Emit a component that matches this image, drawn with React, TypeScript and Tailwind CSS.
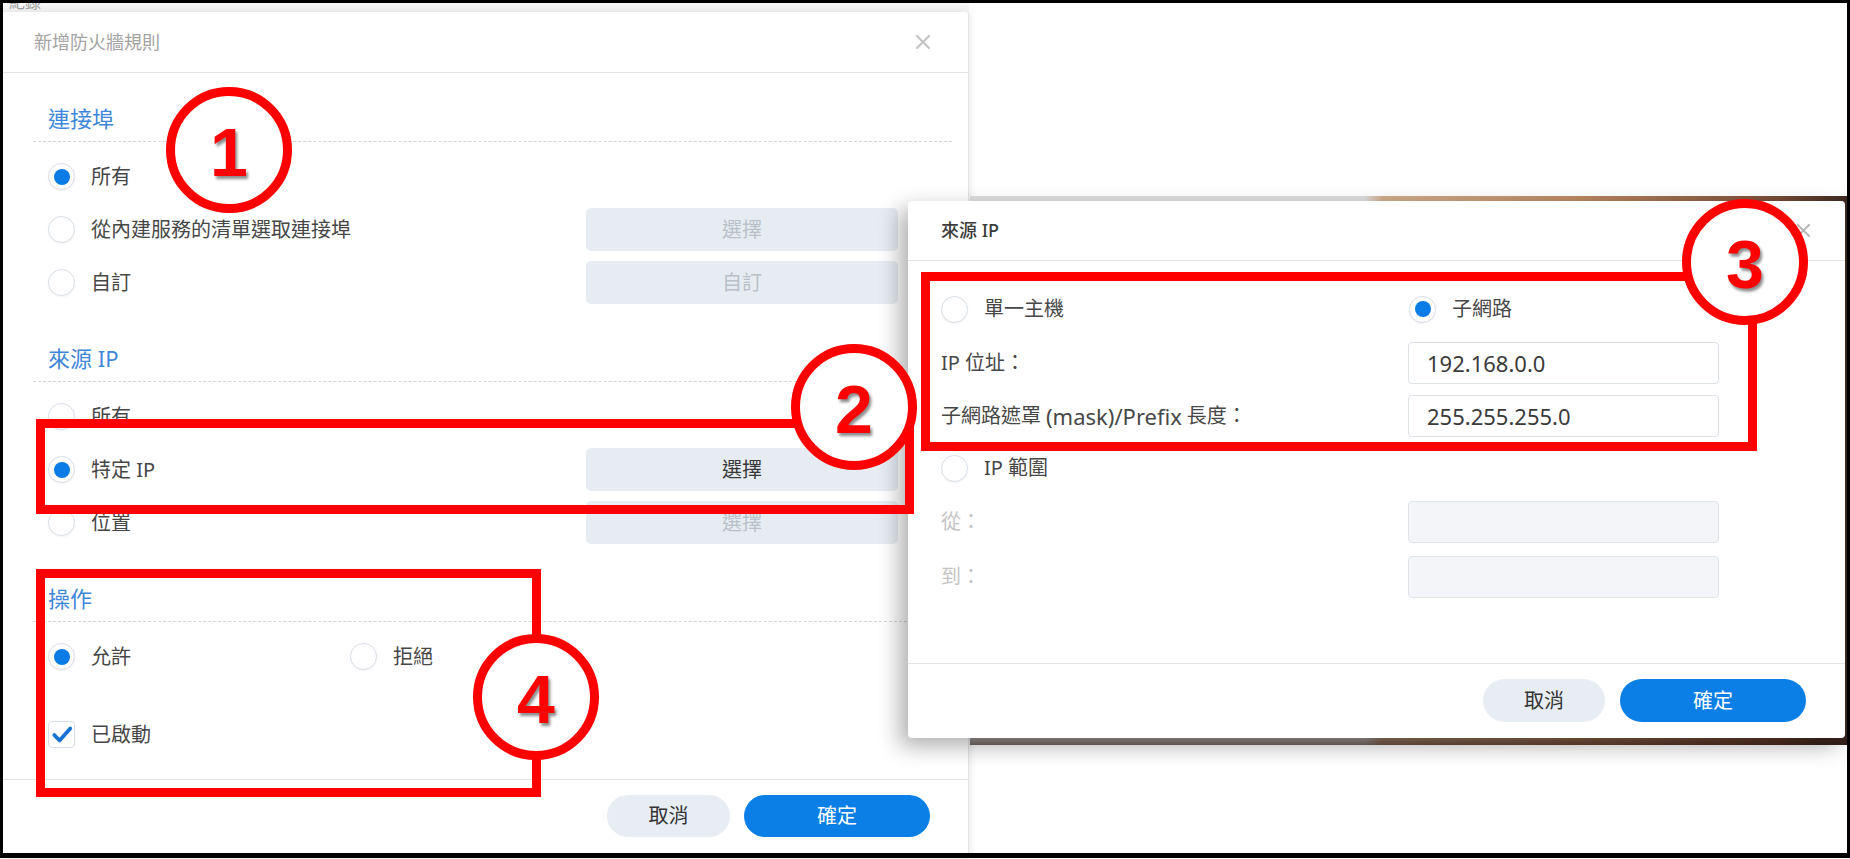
import React from 'react';

function Radio({ checked = false }: { checked?: boolean }) {
  return (
    <span className="flex h-[27px] w-[27px] shrink-0 items-center justify-center rounded-full border-[1.5px] border-[#d7dee7] bg-white shadow-[0_1px_2px_rgba(0,0,0,0.05)]">
      {checked && <span className="h-[16px] w-[16px] rounded-full bg-[#0b7be5]" />}
    </span>
  );
}

function Choice({ label, checked = false }: { label: string; checked?: boolean }) {
  return (
    <div className="flex items-center gap-[16px]">
      <Radio checked={checked} />
      <span className="text-[#474747]">{label}</span>
    </div>
  );
}

function CloseIcon({ className }: { className: string }) {
  return (
    <svg className={className} viewBox="0 0 16 16" fill="none" stroke="currentColor" strokeWidth={2.2} strokeLinecap="round">
      <path d="M2 2l12 12M14 2L2 14" />
    </svg>
  );
}

function SectionTitle({ children }: { children: React.ReactNode }) {
  return (
    <div className="h-[38px] border-b border-dashed border-[#d5d5d5] pl-[15px] text-[22px] leading-[28px] text-[#3f87d8]">
      {children}
    </div>
  );
}

function OptionRow({ label, checked = false, action, active = false }: { label: string; checked?: boolean; action?: string; active?: boolean }) {
  return (
    <div className="grid h-[53px] grid-cols-[538px_312px] items-center">
      <Choice label={label} checked={checked} />
      {action && (
        <button className={`h-[43px] rounded-[5px] bg-[#e7ecf2] ${active ? 'text-[#383838]' : 'text-[#b9c0c8]'}`}>
          {action}
        </button>
      )}
    </div>
  );
}

function Field({ value = '', disabled = false }: { value?: string; disabled?: boolean }) {
  return (
    <input
      readOnly
      disabled={disabled}
      defaultValue={value}
      className={`h-[42px] w-full rounded-[4px] border px-[18px] text-[22px] outline-none ${
        disabled ? 'border-[#e0e4e9] bg-[#f3f5f8]' : 'border-[#dce1e7] bg-white text-[#3a3a3a]'
      }`}
    />
  );
}

function Marker({ n, className }: { n: string; className: string }) {
  return (
    <div className={`absolute flex h-[126px] w-[126px] items-center justify-center rounded-full border-[9px] border-[#ff0000] bg-white ${className}`}>
      <span className="pt-[4px] font-['Liberation_Sans',Arial,sans-serif] text-[68px] font-bold leading-none text-[#ff0000] [text-shadow:2px_3px_3px_rgba(0,0,0,0.45)]">
        {n}
      </span>
    </div>
  );
}

export default function App() {
  return (
    <div className="relative h-[859px] w-[1850px] overflow-hidden bg-white font-['Noto_Sans','Noto_Sans_CJK_TC',sans-serif] text-[20px]">
      {/* window behind the rule dialog */}
      <div className="absolute left-[3px] top-[3px] h-[9px] w-[966px] overflow-hidden bg-[#f7f7f7]">
        <span className="absolute left-[6px] top-[-13px] text-[16px] text-[#a0a0a0]">紀錄</span>
      </div>

      {/* 新增防火牆規則 */}
      <div className="absolute left-[3px] top-[12px] flex h-[846px] w-[966px] flex-col rounded-t-[3px] border-r border-[#e4e4e4] bg-white shadow-[0_0_8px_rgba(0,0,0,0.12)]">
        <div className="flex h-[61px] shrink-0 items-center justify-between border-b border-[#e3e3e3] pl-[31px] pr-[37px]">
          <span className="text-[18px] text-[#a3a3a3]">新增防火牆規則</span>
          <CloseIcon className="h-[16px] w-[16px] text-[#c4c4c4]" />
        </div>

        <div className="pl-[30px] pr-[16px] pt-[31px]">
          <SectionTitle>連接埠</SectionTitle>
          <div className="pl-[15px] pt-[8px]">
            <OptionRow label="所有" checked />
            <OptionRow label="從內建服務的清單選取連接埠" action="選擇" />
            <OptionRow label="自訂" action="自訂" />
          </div>

          <div className="mt-[35px]">
            <SectionTitle>來源 IP</SectionTitle>
          </div>
          <div className="pl-[15px] pt-[8px]">
            <OptionRow label="所有" />
            <OptionRow label="特定 IP" checked action="選擇" active />
            <OptionRow label="位置" action="選擇" />
          </div>

          <div className="mt-[35px]">
            <SectionTitle>操作</SectionTitle>
          </div>
          <div className="pl-[15px] pt-[8px]">
            <div className="grid h-[53px] grid-cols-[302px_auto] items-center">
              <Choice label="允許" checked />
              <Choice label="拒絕" />
            </div>
            <div className="mt-[25px] flex h-[53px] items-center gap-[16px]">
              <span className="flex h-[27px] w-[27px] items-center justify-center rounded-[4px] border-[1.5px] border-[#d7dee7] bg-white">
                <svg className="h-[22px] w-[22px] text-[#1672d4]" viewBox="0 0 20 20" fill="none" stroke="currentColor" strokeWidth={3.4} strokeLinecap="round" strokeLinejoin="round">
                  <path d="M3 10l4.8 5L17.5 4" />
                </svg>
              </span>
              <span className="text-[#474747]">已啟動</span>
            </div>
          </div>
        </div>

        <div className="mt-[18px] flex justify-end gap-[14px] border-t border-[#e3e3e3] pr-[38px] pt-[15px]">
          <button className="h-[42px] w-[123px] rounded-full bg-[#e8edf3] text-[#333]">取消</button>
          <button className="h-[42px] w-[186px] rounded-full bg-[#0b7fe6] text-white">確定</button>
        </div>
      </div>

      {/* window peeking out behind the source IP dialog */}
      <div className="absolute left-[970px] top-[196px] h-[549px] w-[877px] bg-[linear-gradient(180deg,transparent_0%,transparent_97%,rgba(40,20,12,0.6)_100%),linear-gradient(90deg,#dedede_0%,#dedede_45%,#d2ae8c_47%,#b98762_70%,#7a4c36_92%,#3d2a22_100%)]" />

      {/* 來源 IP */}
      <div className="absolute left-[908px] top-[201px] flex h-[537px] w-[937px] flex-col rounded-[4px] bg-white shadow-[-8px_8px_22px_rgba(0,0,0,0.32)]">
        <div className="flex h-[60px] shrink-0 items-center justify-between border-b border-[#e3e3e3] pl-[33px] pr-[34px]">
          <span className="text-[18px] font-medium text-[#3c3c3c]">來源 IP</span>
          <CloseIcon className="h-[15px] w-[15px] text-[#b5b5b5]" />
        </div>

        <div className="grid grid-cols-[467px_311px] pl-[33px] pt-[21px] text-[#474747]">
          <div className="flex h-[54px] items-center">
            <Choice label="單一主機" />
          </div>
          <div className="flex h-[54px] items-center pl-[1px]">
            <Choice label="子網路" checked />
          </div>

          <div className="flex h-[54px] items-center">IP 位址：</div>
          <div className="flex h-[54px] items-center">
            <Field value="192.168.0.0" />
          </div>

          <div className="flex h-[52px] items-center">
            子網路遮罩 <span className="px-[5px] text-[22px]">(mask)/Prefix</span> 長度：
          </div>
          <div className="flex h-[52px] items-center">
            <Field value="255.255.255.0" />
          </div>

          <div className="flex h-[52px] items-center">
            <Choice label="IP 範圍" />
          </div>
          <div className="h-[52px]" />

          <div className="flex h-[56px] items-center text-[#c4c4c4]">從：</div>
          <div className="flex h-[56px] items-center">
            <Field disabled />
          </div>

          <div className="flex h-[54px] items-center text-[#c4c4c4]">到：</div>
          <div className="flex h-[54px] items-center">
            <Field disabled />
          </div>
        </div>

        <div className="mt-auto flex justify-end gap-[15px] border-t border-[#e3e3e3] pb-[16px] pr-[39px] pt-[15px]">
          <button className="h-[43px] w-[122px] rounded-full bg-[#e8edf3] text-[#333]">取消</button>
          <button className="h-[43px] w-[186px] rounded-full bg-[#0b7fe6] text-white">確定</button>
        </div>
      </div>

      {/* annotations */}
      <div className="absolute left-[36px] top-[419px] h-[95px] w-[878px] border-[9px] border-[#ff0000]" />
      <div className="absolute left-[921px] top-[272px] h-[179px] w-[836px] border-[9px] border-[#ff0000]" />
      <div className="absolute left-[36px] top-[569px] h-[228px] w-[505px] border-[9px] border-[#ff0000]" />

      <Marker n="1" className="left-[166px] top-[87px]" />
      <Marker n="2" className="left-[791px] top-[344px]" />
      <Marker n="3" className="left-[1682px] top-[199px]" />
      <Marker n="4" className="left-[473px] top-[634px]" />

      <div className="pointer-events-none absolute left-0 top-0 h-[858px] w-[1850px] border-[3px] border-b-[5px] border-black" />
    </div>
  );
}
